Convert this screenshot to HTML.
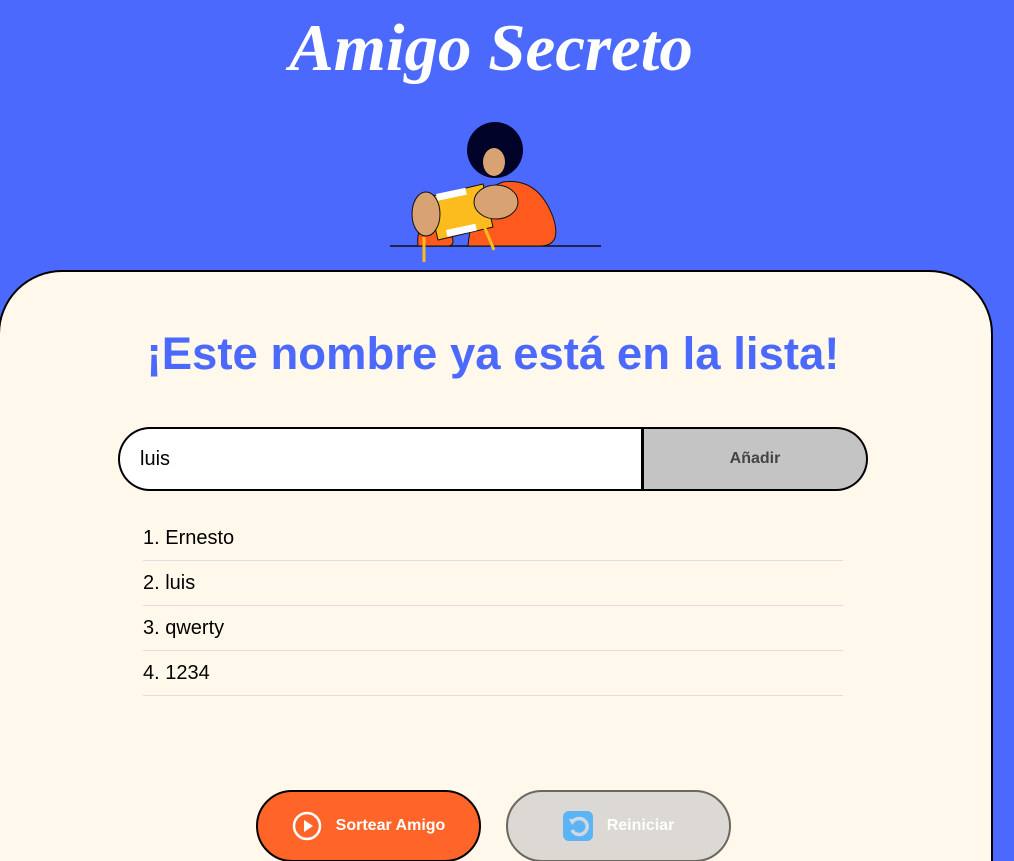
<!DOCTYPE html>
<html><head><meta charset="utf-8"><style>
*{box-sizing:border-box;margin:0;padding:0}
html,body{width:1014px;height:861px;overflow:hidden}
body{background:#4b69fd;font-family:"Liberation Sans",sans-serif;position:relative}
h1{position:absolute;left:0;width:982px;top:10px;text-align:center;font-family:"Liberation Serif",serif;font-style:italic;font-weight:bold;font-size:67px;color:#fff}
.card{position:absolute;left:-2px;top:270px;width:995px;height:600px;background:#fff8eb;border:2px solid #000;border-radius:64px 64px 0 0}
h2{position:absolute;left:0;width:986px;top:328px;text-align:center;font-size:45.5px;color:#4b69fd;font-weight:bold}
.inp{position:absolute;left:118px;top:427px;width:526px;height:64px;border:2px solid #000;border-right:3px solid #000;border-radius:32px 0 0 32px;background:#fff;font-size:20px;padding:19px 0 0 20px}
.add{position:absolute;left:644px;top:427px;width:224px;height:64px;border:2px solid #000;border-left:none;border-radius:0 32px 32px 0;background:#c4c4c4;font-size:16px;font-weight:bold;color:#444;text-align:center;line-height:60px}
.li{position:absolute;left:143px;width:700px;height:45px;border-bottom:1px solid #ddd;font-size:20px;padding-top:11px}
.b{position:absolute;top:790px;width:225px;height:72px;border-radius:36px;font-size:16px;font-weight:bold;color:#fff;display:flex;align-items:center;justify-content:center;gap:14px}
</style></head><body>
<h1>Amigo Secreto</h1>
<svg style="position:absolute;left:388px;top:122px" width="215" height="145" viewBox="0 0 215 145">
<line x1="2" y1="124" x2="213" y2="124" stroke="#111" stroke-width="1.5"/>
<path d="M80 124 Q85 70 115 60 Q150 55 165 95 Q175 125 150 124 Z" fill="#ff5a1e" stroke="#111"/>
<path d="M30 124 Q28 105 40 100 L60 105 Q70 124 60 124Z" fill="#ff5a1e" stroke="#111"/>
<circle cx="107" cy="28" r="28" fill="#010228"/>
<ellipse cx="106" cy="40" rx="11" ry="14" fill="#d9a273"/>
<path d="M40 75 L95 62 L105 105 L50 118 Z" fill="#fcbc1e" stroke="#111"/>
<rect x="48" y="72" width="30" height="7" fill="#fff" transform="rotate(-12 48 72)"/>
<rect x="58" y="108" width="30" height="7" fill="#fff" transform="rotate(-12 58 108)"/>
<ellipse cx="38" cy="92" rx="14" ry="22" fill="#d9a273" stroke="#111"/>
<ellipse cx="108" cy="80" rx="22" ry="17" fill="#d9a273" stroke="#111"/>
<line x1="36" y1="115" x2="36" y2="140" stroke="#fcbc1e" stroke-width="3"/>
<line x1="96" y1="104" x2="106" y2="128" stroke="#fcbc1e" stroke-width="3"/>
</svg>
<div class="card"></div>
<h2>¡Este nombre ya está en la lista!</h2>
<div class="inp">luis</div>
<div class="add">Añadir</div>
<div class="li" style="top:516px">1. Ernesto</div>
<div class="li" style="top:561px">2. luis</div>
<div class="li" style="top:606px">3. qwerty</div>
<div class="li" style="top:651px">4. 1234</div>
<div class="b" style="left:256px;background:#ff6529;border:2px solid #000"><svg width="30" height="30" viewBox="0 0 30 30"><circle cx="15" cy="15" r="13" fill="none" stroke="#fff" stroke-width="2.5"/><path d="M12 9 L21 15 L12 21Z" fill="#fff"/></svg>Sortear Amigo</div>
<div class="b" style="left:506px;background:#dcd9d4;border:2px solid #6b6760"><svg width="30" height="30" viewBox="0 0 30 30"><rect width="30" height="30" rx="6" fill="#5ab4f5"/><path d="M9 12 A8 8 0 1 1 9 19" fill="none" stroke="#cfd8e3" stroke-width="3.5"/><path d="M6 8 L12 8 L9 14Z" fill="#cfd8e3"/></svg>Reiniciar</div>
</body></html>
